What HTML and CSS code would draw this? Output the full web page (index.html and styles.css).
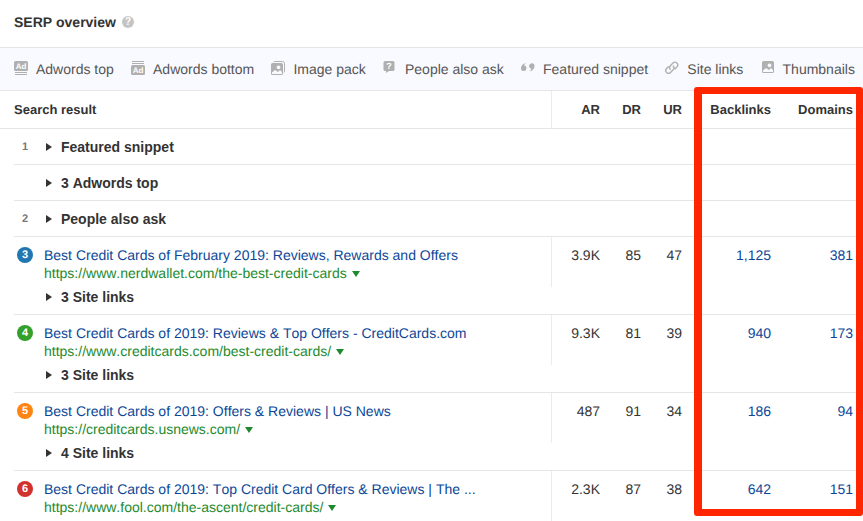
FILE: index.html
```html
<!DOCTYPE html>
<html lang="en">
<head>
<meta charset="utf-8">
<title>SERP overview</title>
<link rel="stylesheet" href="styles.css">
</head>
<body>
<header class="head">
  <h1>SERP overview</h1>
  <button class="help" type="button" aria-label="Help">?</button>
</header>
<ul class="features">
  <li><svg viewBox="0 0 14 14"><rect width="14" height="10" rx="1.5"/><path d="M1 11h12v1H1zM1 13h12v1H1z"/><text x="7" y="8">Ad</text></svg>Adwords top</li>
  <li><svg viewBox="0 0 14 14"><path d="M1 0h12v1H1zM1 2h12v1H1z"/><rect y="4" width="14" height="10" rx="1.5"/><text x="7" y="12">Ad</text></svg>Adwords bottom</li>
  <li><svg viewBox="0 0 14 14"><path class="line" d="M2.500 1Q3 .5 4 .5h7.500q2 0 2 2V10q0 1-.5 1.500"/><path fill-rule="evenodd" d="M1.500 2h9A1.500 1.500 0 0 1 12 3.500v9a1.500 1.500 0 0 1-1.500 1.500h-9A1.500 1.500 0 0 1 0 12.500v-9A1.500 1.500 0 0 1 1.500 2zM1 11.500V13h10v-2L9 9l-2 2-3-2zM7.500 4.500a1.900 1.900 0 1 0 .01 0z"/></svg>Image pack</li>
  <li><svg viewBox="0 0 14 14"><path d="M2 0h8a1.500 1.500 0 0 1 1.500 1.500v7A1.500 1.500 0 0 1 10 10H6l-3 2V10H2A1.500 1.500 0 0 1 .5 8.500v-7A1.500 1.500 0 0 1 2 0z"/><text class="mark" x="6" y="8">?</text></svg>People also ask</li>
  <li><svg viewBox="0 0 14 14"><path d="M5 2C2 2.500 0 4.500 0 7.300a2.700 2.700 0 1 0 3-2.700Q3.500 3.200 5 2zM8.500 10.300c3-.5 5-2.500 5-5.300a2.700 2.700 0 1 0-3 2.700Q10 9.100 8.500 10.300z"/></svg>Featured snippet</li>
  <li><svg viewBox="0 0 14 14"><path class="line thick" d="M5.200 8.300A2.700 2.700 0 0 1 5.400 4.700L8 2.100a2.700 2.700 0 0 1 3.900 3.900L10.200 7.700M8.300 5.200a2.700 2.700 0 0 1-.2 3.600L5.500 11.400a2.700 2.700 0 0 1-3.900-3.900L3.300 5.800"/></svg>Site links</li>
  <li><svg viewBox="0 0 14 14"><path fill-rule="evenodd" d="M2.500 0h9A1.500 1.500 0 0 1 13 1.500v9a1.500 1.500 0 0 1-1.500 1.500h-9A1.500 1.500 0 0 1 1 10.500v-9A1.500 1.500 0 0 1 2.500 0zM2 9.500V11h10V9L10 7 8 9 5 7zM8.500 2.500a1.900 1.900 0 1 0 .01 0z"/></svg>Thumbnails</li>
</ul>
<main class="results">
  <table>
    <colgroup><col class="col-pos"><col><col class="col-ar"><col class="col-rating"><col class="col-rating"><col class="col-backlinks"><col class="col-domains"></colgroup>
    <thead>
      <tr><th class="first" colspan="2" scope="col">Search result</th><th class="ar" scope="col">AR</th><th scope="col">DR</th><th scope="col">UR</th><th scope="col">Backlinks</th><th class="last" scope="col">Domains</th></tr>
    </thead>
    <tbody>
      <tr class="group"><td class="pos">1</td><td class="result" colspan="6"><button class="toggle" type="button">Featured snippet</button></td></tr>
      <tr class="group"><td class="pos"></td><td class="result" colspan="6"><button class="toggle" type="button">3 Adwords top</button></td></tr>
      <tr class="group"><td class="pos">2</td><td class="result" colspan="6"><button class="toggle" type="button">People also ask</button></td></tr>

      <tr class="page"><td class="pos"><span class="badge blue">3</span></td><td class="result"><a class="title" href="#">Best Credit Cards of February 2019: Reviews, Rewards and Offers</a><a class="url" href="#">https://www.nerdwallet.com/the-best-credit-cards</a></td><td class="ar">3.9K</td><td>85</td><td>47</td><td><a href="#">1,125</a></td><td class="last"><a href="#">381</a></td></tr>
      <tr class="sub"><td></td><td class="result" colspan="6"><button class="toggle" type="button">3 Site links</button></td></tr>

      <tr class="page"><td class="pos"><span class="badge green">4</span></td><td class="result"><a class="title" href="#">Best Credit Cards of 2019: Reviews &amp; Top Offers - CreditCards.com</a><a class="url" href="#">https://www.creditcards.com/best-credit-cards/</a></td><td class="ar">9.3K</td><td>81</td><td>39</td><td><a href="#">940</a></td><td class="last"><a href="#">173</a></td></tr>
      <tr class="sub"><td></td><td class="result" colspan="6"><button class="toggle" type="button">3 Site links</button></td></tr>

      <tr class="page"><td class="pos"><span class="badge orange">5</span></td><td class="result"><a class="title" href="#">Best Credit Cards of 2019: Offers &amp; Reviews | US News</a><a class="url" href="#">https://creditcards.usnews.com/</a></td><td class="ar">487</td><td>91</td><td>34</td><td><a href="#">186</a></td><td class="last"><a href="#">94</a></td></tr>
      <tr class="sub"><td></td><td class="result" colspan="6"><button class="toggle" type="button">4 Site links</button></td></tr>

      <tr class="page"><td class="pos"><span class="badge red">6</span></td><td class="result"><a class="title" href="#">Best Credit Cards of 2019: Top Credit Card Offers &amp; Reviews | The ...</a><a class="url" href="#">https://www.fool.com/the-ascent/credit-cards/</a></td><td class="ar">2.3K</td><td>87</td><td>38</td><td><a href="#">642</a></td><td class="last"><a href="#">151</a></td></tr>
    </tbody>
  </table>
  <div class="highlight"></div>
</main>
</body>
</html>
```

FILE: styles.css
```css
* { box-sizing: border-box; }

body {
  margin: 0;
  background: #fff;
  color: #333;
  font: 14px/18px "Liberation Sans", Arial, sans-serif;
  font-kerning: none;
  text-rendering: geometricPrecision;
}

button {
  padding: 0;
  border: 0;
  background: none;
  color: inherit;
  font: inherit;
}

a { color: #0c4797; text-decoration: none; }

.head {
  display: flex;
  align-items: center;
  gap: 6px;
  padding: 13px 14px 16px;
}

h1 { margin: 0; font-size: 14px; line-height: 18px; }

.help {
  width: 12px;
  height: 12px;
  border-radius: 50%;
  background: #c4c4c4;
  color: #fff;
  font-size: 10px;
  font-weight: bold;
  line-height: 12px;
}

.features {
  display: flex;
  justify-content: space-between;
  margin: 0;
  padding: 12px 8px 12px 14px;
  border: solid #e6e6e9;
  border-width: 1px 0;
  background: #f9faff;
  color: #555;
  list-style: none;
  white-space: nowrap;
}

.features li { display: flex; gap: 8px; }

.features svg {
  flex: none;
  width: 14px;
  height: 14px;
  margin-top: 1px;
  fill: #b0b0b0;
}

.features text {
  fill: #fff;
  font-size: 8px;
  font-weight: bold;
  text-anchor: middle;
}

.features .mark { font-size: 9px; }
.features .line { fill: none; stroke: #b0b0b0; }
.features .thick { stroke-width: 1.4; stroke-linecap: round; }

.results { position: relative; padding-left: 14px; }

table {
  width: 100%;
  table-layout: fixed;
  border-spacing: 0;
}

.col-pos { width: 22px; }
.col-ar { width: 49px; }
.col-rating { width: 41px; }
.col-backlinks { width: 89px; }
.col-domains { width: 92px; }

th, td { padding: 0; text-align: right; vertical-align: top; }

th {
  padding: 10px 0 9px;
  border-bottom: 1px solid #e6e6e6;
  font-size: 13px;
}

.first { position: relative; text-align: left; }

.first::after {
  content: "";
  position: absolute;
  right: 100%;
  bottom: -1px;
  width: 14px;
  border-bottom: 1px solid #e6e6e6;
}

.ar { border-left: 1px solid #ebebeb; }

.group td { padding-top: 9px; padding-bottom: 8px; border-bottom: 1px solid #e6e6e6; }
.page td { padding-top: 9px; padding-bottom: 5px; white-space: nowrap; }
.sub td { padding-top: 1px; padding-bottom: 8px; border-bottom: 1px solid #e6e6e6; }

td.result { padding-left: 8px; text-align: left; }
th.last, td.last { padding-right: 10px; }
td.pos { text-align: center; }
.group .pos { color: #777; font-size: 11px; font-weight: bold; }

.badge {
  display: block;
  width: 16px;
  margin: 1px auto;
  border-radius: 50%;
  color: #fff;
  font-size: 11px;
  font-weight: bold;
  line-height: 16px;
}

.blue { background: #2178b0; }
.green { background: #33a02c; }
.orange { background: #ff8412; }
.red { background: #d2322d; }

.toggle {
  display: flex;
  align-items: center;
  gap: 9px;
  padding-left: 2px;
  font-weight: bold;
}

.toggle::before {
  content: "";
  border: solid transparent;
  border-width: 4px 0 4px 6px;
  border-left-color: #333;
}

.title, .url { display: block; }
.url { color: #1d8a2e; }

.url::after {
  content: "";
  display: inline-block;
  margin-left: 5px;
  border: solid transparent;
  border-width: 6px 4px 0;
  border-top-color: #1d8a2e;
  vertical-align: 1px;
}

.highlight {
  position: absolute;
  top: -4px;
  right: 0;
  bottom: 5px;
  width: 169px;
  border: 7px solid #ff2600;
  border-left-width: 8px;
  border-radius: 3px;
  pointer-events: none;
}
```
